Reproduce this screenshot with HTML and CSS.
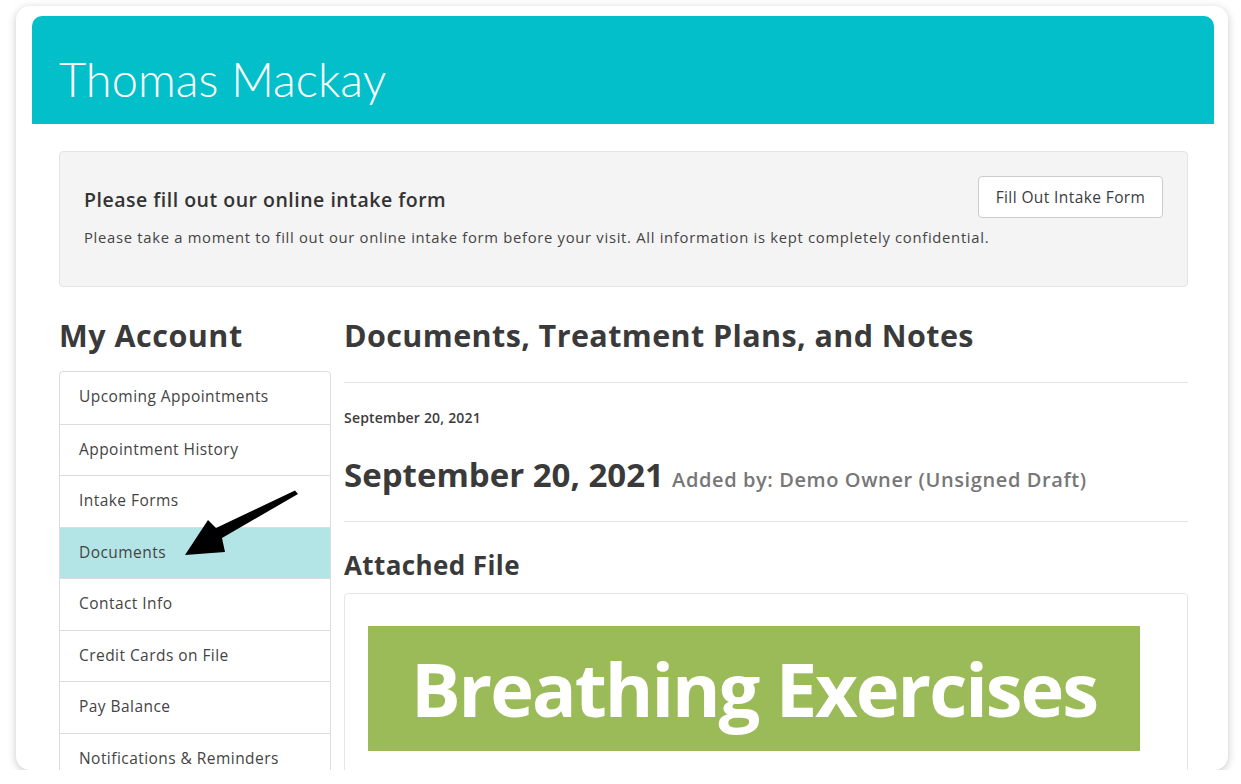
FILE: index.html
```html
<!DOCTYPE html>
<html lang="en">
<head>
  <meta charset="UTF-8" />
  <title>Thomas Mackay - My Account</title>
  <link rel="stylesheet" href="styles.css">
</head>
<body>
  <div class="frame">
    <div class="header">
      <h1>Thomas Mackay</h1>
    </div>

    <div class="content">
      <div class="intake">
        <button class="btn">Fill Out Intake Form</button>
        <h3>Please fill out our online intake form</h3>
        <p>Please take a moment to fill out our online intake form before your visit. All information is kept completely confidential.</p>
      </div>

      <div class="columns">
        <div class="sidebar">
          <h2>My Account</h2>
          <ul class="nav">
            <li>Upcoming Appointments</li>
            <li>Appointment History</li>
            <li>Intake Forms</li>
            <li class="active">Documents</li>
            <li>Contact Info</li>
            <li>Credit Cards on File</li>
            <li>Pay Balance</li>
            <li>Notifications &amp; Reminders</li>
          </ul>

          <!-- pointer arrow drawn over the nav -->
          <svg class="arrow" width="132" height="70" viewBox="0 0 132 70">
            <path d="M127 0.5 L130 4 L54 48 L57 62 L17 65 L40 30 L48 38 Z" fill="#000" />
          </svg>
        </div>

        <div class="main">
          <h2>Documents, Treatment Plans, and Notes</h2>
          <div class="entry">
            <div class="entry-date">September 20, 2021</div>
            <div class="entry-title">
              <span class="big-date">September 20, 2021</span>
              <span class="added-by">Added by: Demo Owner (Unsigned Draft)</span>
            </div>
          </div>
          <h3 class="attached">Attached File</h3>
          <div class="file-box">
            <div class="file-image">Breathing Exercises</div>
          </div>
        </div>
      </div>
    </div>
  </div>
</body>
</html>
```

FILE: styles.css
```css
body {
  margin: 0;
  background-color: #fff;
  font-family: "Open Sans", sans-serif;
  color: #3c3c3c;
}
h1, h2, h3, p {
  margin: 0;
}

.frame {
  box-sizing: border-box;
  width: 1212px;
  height: 764px;
  margin: 6px 0 0 16px;
  padding: 10px 14px 0 16px;
  background-color: #fff;
  border-radius: 14px;
  box-shadow: 0 2px 8px rgba(0, 0, 0, 0.22);
  overflow: hidden;
}

.header {
  height: 108px;
  background-color: #02bfc9;
  border-radius: 10px 10px 0 0;
  padding: 9px 0 0 27px;
  box-sizing: border-box;
}
.header h1 {
  font-family: "Lato", sans-serif;
  font-weight: 300;
  font-size: 47px;
  color: #fff;
  line-height: 108px;
  height: 99px;
}

.content {
  padding: 27px 26px 0 27px;
}

.intake {
  height: 136px;
  box-sizing: border-box;
  padding: 24px 24px 0 24px;
  background-color: #f4f4f4;
  border: 1px solid #e4e4e4;
  border-radius: 4px;
}
.intake h3 {
  font-size: 19.5px;
  font-weight: 600;
  letter-spacing: 0.5px;
  color: #333;
  padding-top: 11px;
  line-height: 26px;
}
.intake p {
  font-size: 14.8px;
  letter-spacing: 0.7px;
  color: #444;
  margin-top: 14px;
  line-height: 20px;
  white-space: nowrap;
}
.btn {
  float: right;
  font-family: "Open Sans", sans-serif;
  font-size: 15.5px;
  letter-spacing: 0.4px;
  color: #3c3c3c;
  background-color: #fff;
  border: 1px solid #ccc;
  border-radius: 4px;
  width: 185px;
  height: 42px;
  padding: 0;
}

.columns {
  display: flex;
  gap: 13px;
  margin-top: 28px;
}

.sidebar {
  width: 272px;
  flex-shrink: 0;
  position: relative;
}
.sidebar h2, .main h2 {
  font-size: 30.5px;
  font-weight: 700;
  letter-spacing: 0.5px;
  color: #3a3a3a;
  line-height: 40px;
  height: 56px;
}
.main h2 {
  height: 67px;
  letter-spacing: 0.4px;
}
.nav {
  list-style: none;
  margin: 0;
  padding: 0;
  border: 1px solid #dcdcdc;
  border-radius: 4px 4px 0 0;
}
.nav li {
  height: 51.5px;
  line-height: 48px;
  box-sizing: border-box;
  padding-left: 19px;
  font-size: 15.5px;
  letter-spacing: 0.45px;
  color: #444;
  border-top: 1px solid #dcdcdc;
}
.nav li:first-child {
  border-top: none;
}
.nav li.active {
  background-color: #b3e4e6;
}
.arrow {
  position: absolute;
  left: 109px;
  top: 175px;
}

.main {
  flex: 1;
}
.entry {
  border-top: 1px solid #e3e3e3;
  border-bottom: 1px solid #e3e3e3;
  padding: 25px 0 20px;
}
.entry-date {
  font-size: 14px;
  font-weight: 600;
  letter-spacing: 0.2px;
  color: #3c3c3c;
  line-height: 20px;
}
.entry-title {
  margin-top: 27px;
  line-height: 40px;
}
.big-date {
  font-size: 33px;
  font-weight: 700;
  color: #3a3a3a;
}
.added-by {
  font-size: 20px;
  font-weight: 600;
  letter-spacing: 0.6px;
  color: #777;
  margin-left: 4px;
}
.attached {
  font-size: 26px;
  font-weight: 700;
  letter-spacing: 0.4px;
  color: #3a3a3a;
  margin-top: 26px;
  line-height: 34px;
}
.file-box {
  margin-top: 11px;
  border: 1px solid #e6e6e6;
  border-radius: 4px;
  padding: 32px 47px 40px 23px;
}
.file-image {
  height: 125px;
  background-color: #9bbb59;
  color: #fff;
  font-family: "Open Sans", sans-serif;
  font-weight: 700;
  font-size: 74px;
  letter-spacing: -2px;
  line-height: 125px;
  text-align: center;
}
```
